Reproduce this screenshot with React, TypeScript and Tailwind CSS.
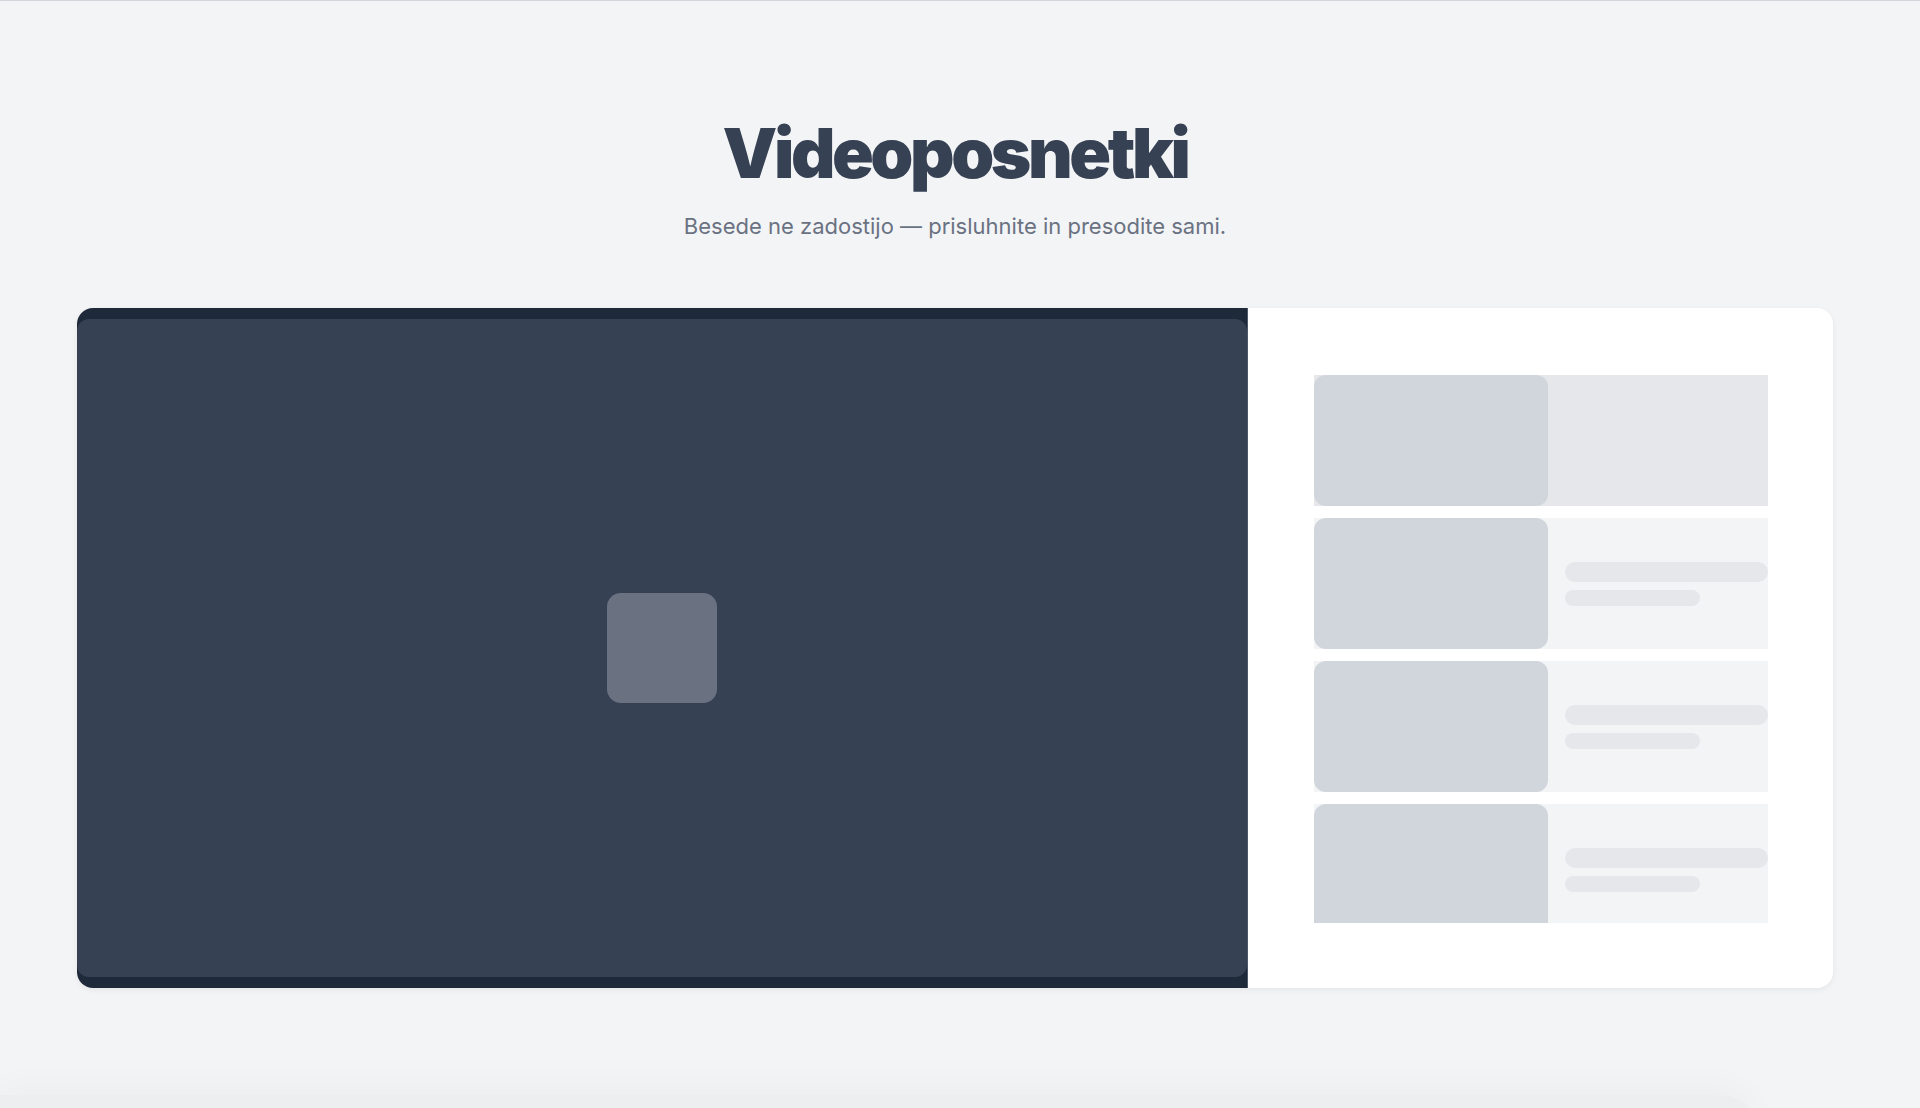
// Videoposnetki – placeholder video section with playlist skeleton

const ITEMS = [
  { id: 1, active: true },
  { id: 2, active: false },
  { id: 3, active: false },
  { id: 4, active: false },
]

function PlaylistItem({ active }: { active: boolean }) {
  return (
    <div className={`flex h-[131px] shrink-0 items-center ${active ? 'bg-gray-200' : 'bg-gray-100'}`}>
      <div className="aspect-video h-full w-[234px] shrink-0 rounded-xl bg-gray-300" />
      <div className="flex min-w-0 flex-1 flex-col gap-2 pl-[17px]">
        <div className="h-5 w-full rounded-full bg-gray-200" />
        <div className="h-4 w-2/3 rounded-full bg-gray-200" />
      </div>
    </div>
  )
}

export default function App() {
  return (
    <div className="relative min-h-screen overflow-hidden border-t border-gray-300 bg-gray-100 font-['Inter','Noto_Sans',sans-serif]">
      <section className="pr-[10px] pt-[118px]">
        <div className="mx-auto w-[1756px]">
          {/* Header */}
          <h1 className="text-center text-[69px] font-black leading-none tracking-tighter text-gray-700">
            Videoposnetki
          </h1>
          <p className="mt-[24px] text-center text-[22px] leading-7 text-gray-500">
            Besede ne zadostijo — prisluhnite in presodite sami.
          </p>

          {/* Player + playlist */}
          <div className="mt-[68px] grid grid-cols-3 overflow-hidden rounded-2xl bg-white shadow-[0_2px_6px_rgba(0,0,0,0.06)]">
            <div className="col-span-2 flex items-center border-r border-gray-400/40 bg-gray-800">
              <div className="flex aspect-video w-full items-center justify-center rounded-xl bg-gray-700">
                <div className="size-[110px] rounded-[14px] bg-gray-500" />
              </div>
            </div>
            <div className="pb-[65px] pl-[66px] pr-[65px] pt-[67px]">
              <div className="flex h-[548px] flex-col gap-3 overflow-hidden">
                {ITEMS.map((it) => (
                  <PlaylistItem key={it.id} active={it.active} />
                ))}
              </div>
            </div>
          </div>
        </div>
      </section>

      {/* next section edge */}
      <div className="mt-[107px] h-[40px] w-[1760px] rounded-tr-[40px] bg-[#eceef0] shadow-[0_-12px_30px_rgba(0,0,0,0.025)]" />
    </div>
  )
}
